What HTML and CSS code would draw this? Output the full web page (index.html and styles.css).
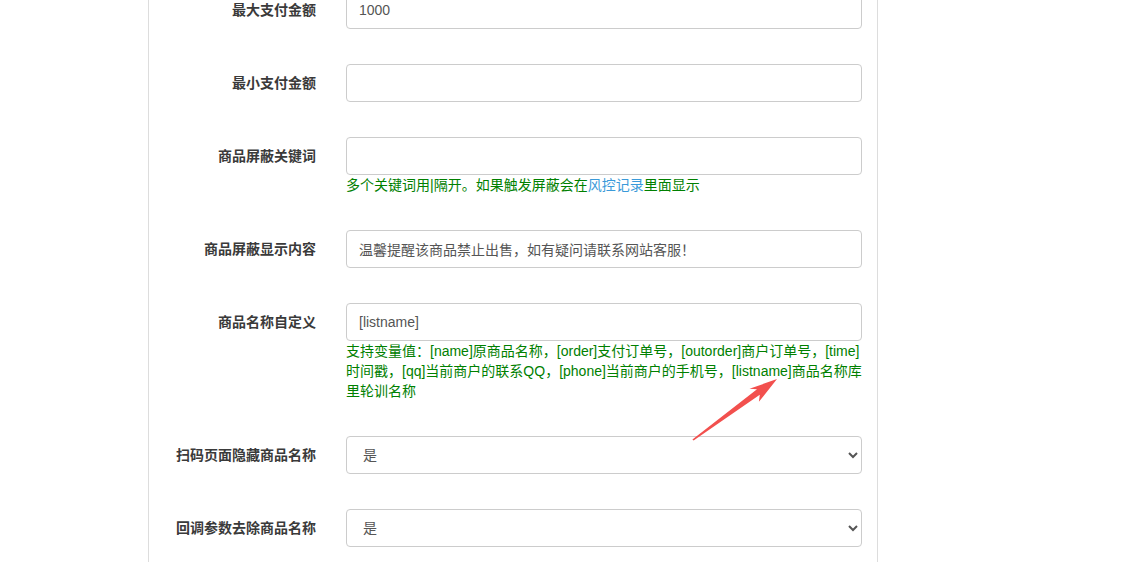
FILE: index.html
```html
<!DOCTYPE html>
<html lang="zh-CN">
<head>
<meta charset="utf-8">
<title>支付设置</title>
<link rel="stylesheet" href="styles.css">
</head>
<body>
<div class="panel">
  <form class="form">
    <div class="group">
      <label class="label">最大支付金额</label>
      <div class="field"><input class="control" type="text" value="1000"></div>
    </div>
    <div class="group">
      <label class="label">最小支付金额</label>
      <div class="field"><input class="control" type="text" value=""></div>
    </div>
    <div class="group">
      <label class="label">商品屏蔽关键词</label>
      <div class="field">
        <input class="control" type="text" value="">
        <div class="help">多个关键词用|隔开。如果触发屏蔽会在<a class="link" href="#">风控记录</a>里面显示</div>
      </div>
    </div>
    <div class="group">
      <label class="label">商品屏蔽显示内容</label>
      <div class="field"><input class="control" type="text" value="温馨提醒该商品禁止出售，如有疑问请联系网站客服！"></div>
    </div>
    <div class="group">
      <label class="label">商品名称自定义</label>
      <div class="field">
        <input class="control" type="text" value="[listname]">
        <div class="help">支持变量值：[name]原商品名称，[order]支付订单号，[outorder]商户订单号，[time]时间戳，[qq]当前商户的联系QQ，[phone]当前商户的手机号，[listname]商品名称库里轮训名称</div>
      </div>
    </div>
    <div class="group">
      <label class="label">扫码页面隐藏商品名称</label>
      <div class="field">
        <select class="control select"><option>是</option><option>否</option></select>
      </div>
    </div>
    <div class="group">
      <label class="label">回调参数去除商品名称</label>
      <div class="field">
        <select class="control select"><option>是</option><option>否</option></select>
      </div>
    </div>
  </form>
</div>
<svg class="annot" width="1123" height="562" viewBox="0 0 1123 562" aria-hidden="true">
  <polygon points="692.4,439.4 693.6,440.6 759.8,394.8 758.9,401.8 777,379 749.5,388.8 757.0,389.2" fill="#f2504e"/>
</svg>
</body>
</html>
```
FILE: styles.css
```css
html, body {
  margin: 0;
  padding: 0;
  background: #ffffff;
}
body {
  font-family: "Liberation Sans", "Noto Sans CJK SC", sans-serif;
  font-size: 14px;
  color: #333333;
  height: 562px;
  overflow: hidden;
  position: relative;
}
.panel {
  display: flow-root;
  box-sizing: border-box;
  margin-left: 148px;
  width: 730px;
  height: 562px;
  border-left: 1px solid #dddddd;
  border-right: 1px solid #dddddd;
  background: #ffffff;
}
.form {
  margin-top: -9px;
  display: flex;
  flex-direction: column;
  gap: 35px;
  padding-right: 15px;
}
.group {
  display: grid;
  grid-template-columns: 167px 516px;
  column-gap: 30px;
  align-items: start;
}
.label {
  text-align: right;
  font-weight: bold;
  line-height: 20px;
  padding-top: 9px;
  color: #3a3a3a;
  white-space: nowrap;
}
.field {
  display: flex;
  flex-direction: column;
}
.control {
  box-sizing: border-box;
  width: 516px;
  height: 38px;
  margin: 0;
  padding: 6px 12px;
  font-family: "Liberation Sans", "Noto Sans CJK SC", sans-serif;
  font-size: 14px;
  color: #555555;
  background: #ffffff;
  border: 1px solid #cccccc;
  border-radius: 4px;
  outline: none;
}
.select {
  padding-left: 12px;
  padding-right: 8px;
}
.help {
  color: #008000;
  line-height: 20px;
  font-size: 14px;
}
.link {
  color: #3a9ad9;
  text-decoration: none;
}
.annot {
  position: absolute;
  left: 0;
  top: 0;
  pointer-events: none;
}
```
